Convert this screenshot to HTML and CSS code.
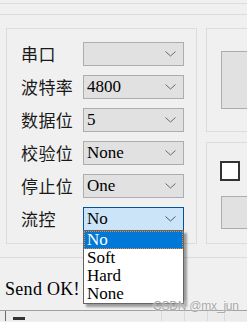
FILE: index.html
```html
<!DOCTYPE html>
<html lang="zh-CN">
<head>
    <meta charset="UTF-8">
    <meta name="viewport" content="width=device-width, initial-scale=1.0">
    <title>串口设置</title>
    <link rel="stylesheet" href="styles.css">
</head>
<body>
    <div class="window">
      <div class="topbar"></div>
      <div class="main">
        <div class="group serial">
          <div class="row">
            <span class="label">串口</span>
            <div class="combo">
              <span class="value"></span>
              <svg class="arrow" width="11" height="6" viewBox="0 0 11 6"><polyline points="0.5,0.5 5.5,5 10.5,0.5" fill="none" stroke="#6a6a6a" stroke-width="1"/></svg>
            </div>
          </div>
          <div class="row">
            <span class="label">波特率</span>
            <div class="combo">
              <span class="value">4800</span>
              <svg class="arrow" width="11" height="6" viewBox="0 0 11 6"><polyline points="0.5,0.5 5.5,5 10.5,0.5" fill="none" stroke="#6a6a6a" stroke-width="1"/></svg>
            </div>
          </div>
          <div class="row">
            <span class="label">数据位</span>
            <div class="combo">
              <span class="value">5</span>
              <svg class="arrow" width="11" height="6" viewBox="0 0 11 6"><polyline points="0.5,0.5 5.5,5 10.5,0.5" fill="none" stroke="#6a6a6a" stroke-width="1"/></svg>
            </div>
          </div>
          <div class="row">
            <span class="label">校验位</span>
            <div class="combo">
              <span class="value">None</span>
              <svg class="arrow" width="11" height="6" viewBox="0 0 11 6"><polyline points="0.5,0.5 5.5,5 10.5,0.5" fill="none" stroke="#6a6a6a" stroke-width="1"/></svg>
            </div>
          </div>
          <div class="row">
            <span class="label">停止位</span>
            <div class="combo">
              <span class="value">One</span>
              <svg class="arrow" width="11" height="6" viewBox="0 0 11 6"><polyline points="0.5,0.5 5.5,5 10.5,0.5" fill="none" stroke="#6a6a6a" stroke-width="1"/></svg>
            </div>
          </div>
          <div class="row">
            <span class="label">流控</span>
            <div class="combo open">
              <span class="value">No</span>
              <svg class="arrow" width="11" height="6" viewBox="0 0 11 6"><polyline points="0.5,0.5 5.5,5 10.5,0.5" fill="none" stroke="#4a5a6a" stroke-width="1"/></svg>
              <ul class="dropdown">
                <li class="item selected">No</li>
                <li class="item">Soft</li>
                <li class="item">Hard</li>
                <li class="item">None</li>
              </ul>
            </div>
          </div>
        </div>
        <div class="side">
          <div class="group side-top">
            <div class="button tall"></div>
          </div>
          <div class="group side-bottom">
            <div class="checkbox"></div>
            <div class="button"></div>
          </div>
        </div>
      </div>
      <div class="status">Send OK!</div>
      <div class="strip">
        <div class="cell first"><span class="mark"></span></div>
        <div class="cell wide"></div>
        <div class="cell"></div>
        <div class="cell small"></div>
        <div class="cell"></div>
      </div>
      <div class="watermark">CSDN @mx_jun</div>
    </div>
</body>
</html>
```

FILE: styles.css
```css
body {
  margin: 0;
  background-color: #f0f0f0;
}
.window {
  position: relative;
  width: 247px;
  height: 322px;
  overflow: hidden;
  background-color: #f0f0f0;
  font-family: "Liberation Serif", serif;
  color: #000;
}
.topbar {
  margin-top: 3px;
  height: 10px;
  border-top: 1px solid #dcdcdc;
  border-bottom: 1px solid #dcdcdc;
}
.main {
  display: flex;
  margin-top: 13px;
  padding-left: 6px;
}
.group {
  box-sizing: border-box;
  border: 1px solid #dcdcdc;
}
.serial {
  flex: 0 0 191px;
  height: 216px;
  padding: 13px 0 0 14px;
  display: flex;
  flex-direction: column;
  gap: 9px;
}
.row {
  display: flex;
  align-items: center;
  height: 24px;
}
.label {
  width: 62px;
  font-family: "Noto Sans CJK SC", sans-serif;
  font-size: 17px;
  letter-spacing: 0.4px;
  line-height: 24px;
  color: #1a1a1a;
}
.combo {
  position: relative;
  box-sizing: border-box;
  width: 101px;
  height: 24px;
  display: flex;
  align-items: center;
  padding: 0 7px 0 3px;
  background-color: #e1e1e1;
  border: 1px solid #adadad;
}
.combo.open {
  background-color: #cce4f7;
  border-color: #005499;
}
.value {
  font-size: 17px;
  line-height: 22px;
}
.arrow {
  margin-left: auto;
}
.dropdown {
  position: absolute;
  top: 100%;
  left: -1px;
  width: 101px;
  box-sizing: border-box;
  margin: 0;
  padding: 0;
  list-style: none;
  background-color: #fff;
  border: 1px solid #646464;
  box-shadow: 3px 3px 2px rgba(0, 0, 0, 0.35);
  z-index: 2;
}
.item {
  height: 18px;
  padding-left: 3px;
  font-size: 17px;
  line-height: 18px;
}
.item.selected {
  background-color: #0078d7;
  color: #fff;
  outline: 1px dotted #f08a24;
  outline-offset: -1px;
}
.side {
  flex: 0 0 80px;
  margin-left: 9px;
  display: flex;
  flex-direction: column;
  gap: 10px;
}
.side-top {
  height: 104px;
  padding: 22px 0 0 14px;
}
.side-bottom {
  height: 102px;
  padding: 18px 0 0 13px;
}
.button {
  box-sizing: border-box;
  width: 70px;
  height: 33px;
  background-color: #e1e1e1;
  border: 1px solid #adadad;
}
.button.tall {
  height: 58px;
}
.side-bottom .button {
  margin: 15px 0 0 1px;
}
.checkbox {
  box-sizing: border-box;
  width: 20px;
  height: 20px;
  background-color: #fff;
  border: 2px solid #333;
}
.status {
  margin-top: 13px;
  height: 53px;
  box-sizing: border-box;
  padding: 21px 0 0 5px;
  border-top: 1px solid #dcdcdc;
  font-size: 18px;
  line-height: 20px;
  letter-spacing: 0.3px;
}
.strip {
  display: flex;
  height: 10px;
  border-top: 1px solid #a0a0a0;
  background-color: #ececec;
}
.cell {
  width: 24px;
  border-left: 1px solid #dadada;
}
.cell.first {
  width: 162px;
  margin-left: 5px;
  border-left: 1px solid #6a6a6a;
  padding: 6px 0 0 7px;
}
.cell.wide {
  width: 24px;
}
.cell.small {
  width: 17px;
}
.mark {
  display: block;
  width: 12px;
  height: 3px;
  background-color: #333;
}
.watermark {
  position: absolute;
  left: 153px;
  top: 300px;
  font-family: "Liberation Sans", sans-serif;
  font-size: 12px;
  letter-spacing: -0.2px;
  line-height: 13px;
  color: #a8a8a8;
  text-shadow: 0 0 2px #fff;
  z-index: 3;
}
```
